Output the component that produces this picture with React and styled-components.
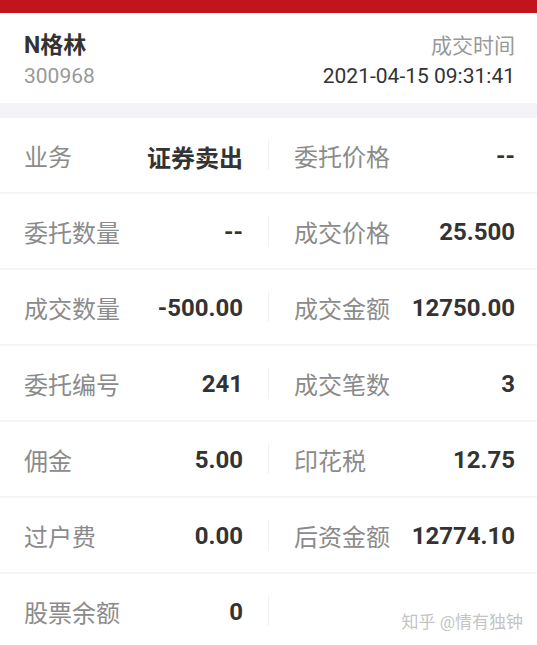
import React from "react";
import styled, { createGlobalStyle } from "styled-components";

const GlobalStyle = createGlobalStyle`
  html, body {
    margin: 0;
    padding: 0;
    background: #fff;
  }
  body {
    font-family: Roboto, "Noto Sans CJK SC", sans-serif;
    -webkit-font-smoothing: antialiased;
  }
`;

const Page = styled.div`
  position: relative;
  width: 537px;
  height: 645px;
  overflow: hidden;
  background: #fff;
`;

const TopBar = styled.div`
  height: 13px;
  background: #c2141d;
`;

const Header = styled.div`
  height: 90px;
  padding: 6px 22px 0 24px;
  display: flex;
  justify-content: space-between;
  align-items: center;
  box-sizing: border-box;
`;

const HeaderCol = styled.div`
  display: flex;
  flex-direction: column;
  align-items: ${(p) => (p.$right ? "flex-end" : "flex-start")};
  gap: 4px;
`;

const StockName = styled.div`
  font-size: 23px;
  font-weight: 700;
  color: #333;
  line-height: 26px;
`;

const SubText = styled.div`
  font-size: ${(p) => p.$size || 21}px;
  color: ${(p) => p.$color || "#999"};
  line-height: 26px;
`;

const Gap = styled.div`
  height: 15px;
  background: #f4f4f8;
`;

const Row = styled.div`
  display: grid;
  grid-template-columns: 1fr 1px 1fr;
  align-items: center;
  height: 74px;
  border-bottom: 2px solid #f4f4f4;
`;

const Cell = styled.div`
  display: flex;
  justify-content: space-between;
  align-items: center;
  padding: ${(p) => (p.$right ? "0 22px 0 25px" : "0 25px 0 24px")};
`;

const Label = styled.span`
  font-size: 24px;
  color: #8b8b8b;
`;

const Value = styled.span`
  font-size: 24px;
  font-weight: 700;
  color: #333;
  padding-top: 2px;
`;

const Divider = styled.div`
  width: 1px;
  height: 30px;
  background: #f0f0f0;
`;

const Watermark = styled.div`
  position: absolute;
  right: 14px;
  bottom: 12px;
  font-size: 17px;
  color: #c4c4c4;
  text-shadow: 0 0 1px #fff;
`;

const rows = [
  [["业务", "证券卖出"], ["委托价格", "--"]],
  [["委托数量", "--"], ["成交价格", "25.500"]],
  [["成交数量", "-500.00"], ["成交金额", "12750.00"]],
  [["委托编号", "241"], ["成交笔数", "3"]],
  [["佣金", "5.00"], ["印花税", "12.75"]],
  [["过户费", "0.00"], ["后资金额", "12774.10"]],
  [["股票余额", "0"], null],
];

export default function App() {
  return (
    <Page>
      <GlobalStyle />
      <TopBar />
      <Header>
        <HeaderCol>
          <StockName>N格林</StockName>
          <SubText>300968</SubText>
        </HeaderCol>
        <HeaderCol $right>
          <SubText>成交时间</SubText>
          <SubText $color="#333">2021-04-15 09:31:41</SubText>
        </HeaderCol>
      </Header>
      <Gap />
      {rows.map(([left, right], i) => (
        <Row key={i}>
          <Cell>
            <Label>{left[0]}</Label>
            <Value>{left[1]}</Value>
          </Cell>
          <Divider />
          <Cell $right>
            {right && (
              <>
                <Label>{right[0]}</Label>
                <Value>{right[1]}</Value>
              </>
            )}
          </Cell>
        </Row>
      ))}
      <Watermark>知乎 @情有独钟</Watermark>
    </Page>
  );
}
